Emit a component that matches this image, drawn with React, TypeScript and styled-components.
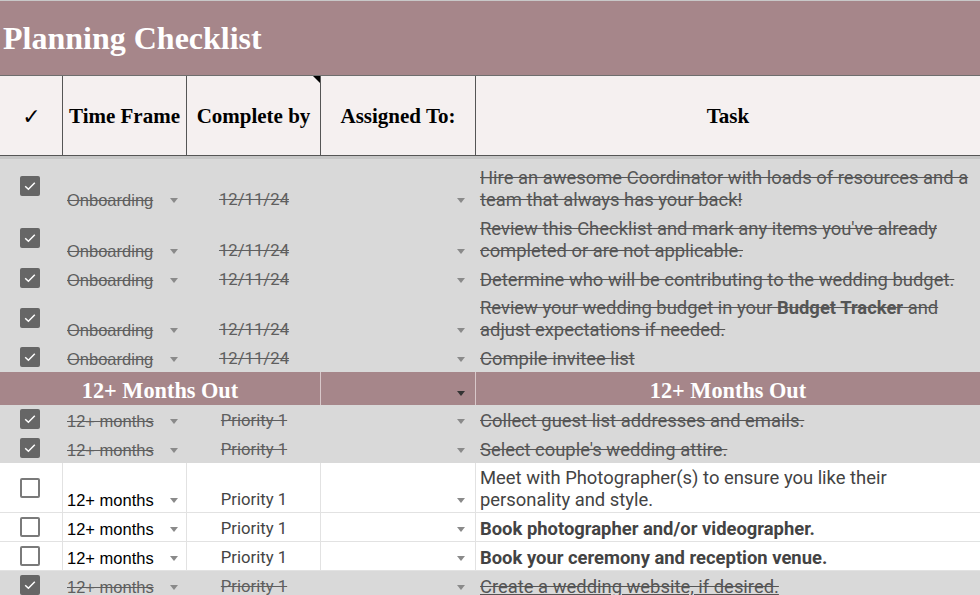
import React from "react";
import styled, { createGlobalStyle } from "styled-components";

const Global = createGlobalStyle`
  html, body { margin: 0; padding: 0; background: #ffffff; overflow: hidden; }
  * { box-sizing: border-box; }
`;

const COLS = "63px 124px 134px 155px 1fr";
const MAUVE = "#a6868a";

const Sheet = styled.div`
  width: 980px;
  font-family: Roboto, "Liberation Sans", sans-serif;
`;

const TitleBar = styled.div`
  height: 75px;
  border-top: 1px solid #c8c8c8;
  background: ${MAUVE};
  display: flex;
  align-items: center;
  padding-left: 3px;
  font-family: "Liberation Serif", serif;
  font-weight: 700;
  font-size: 32px;
  color: #ffffff;
`;

const HeaderRow = styled.div`
  display: grid;
  grid-template-columns: ${COLS};
  height: 81px;
  border-top: 1px solid #6e6e6e;
  border-bottom: 1px solid #555555;
  background: #f5f0f0;
`;

const HeaderCell = styled.div<{ $last?: boolean; $note?: boolean }>`
  position: relative;
  display: flex;
  align-items: center;
  justify-content: center;
  padding-top: 1px;
  border-right: ${(p) => (p.$last ? "none" : "1px solid #555555")};
  font-family: "Liberation Serif", serif;
  font-weight: 700;
  font-size: 21px;
  color: #000000;
  &::after {
    content: "";
    display: ${(p) => (p.$note ? "block" : "none")};
    position: absolute;
    top: 0;
    right: 0;
    border-top: 7px solid #000;
    border-left: 7px solid transparent;
  }
`;

const CheckGlyph = styled.span`
  font-family: "DejaVu Sans", sans-serif;
  font-size: 22px;
  padding-left: 1px;
`;

const FreezeBar = styled.div`
  height: 3px;
  background: #c6c6c6;
`;

const Row = styled.div<{ $done: boolean; $h: number }>`
  display: grid;
  grid-template-columns: ${COLS};
  height: ${(p) => p.$h}px;
  background: ${(p) => (p.$done ? "#d9d9d9" : "#ffffff")};
  border-bottom: 1px solid ${(p) => (p.$done ? "#d9d9d9" : "#e2e2e2")};
`;

const Cell = styled.div<{ $done: boolean }>`
  border-right: 1px solid ${(p) => (p.$done ? "transparent" : "#e2e2e2")};
  display: flex;
  min-width: 0;
`;

const BoxCell = styled(Cell)`
  align-items: center;
  justify-content: center;
  padding-right: 2px;
`;

const Box = styled.span<{ $on: boolean }>`
  width: 20px;
  height: 20px;
  border-radius: 2px;
  display: flex;
  align-items: center;
  justify-content: center;
  background: ${(p) => (p.$on ? "#666666" : "#ffffff")};
  border: ${(p) => (p.$on ? "none" : "2px solid #7a7a7a")};
`;

const FrameCell = styled(Cell)`
  align-items: flex-end;
  justify-content: space-between;
  padding: 0 8px 1px 4px;
  font-family: "Liberation Sans", Arial, sans-serif;
  font-size: 16.5px;
  line-height: 22px;
  color: ${(p) => (p.$done ? "#5f5f5f" : "#000000")};
  text-decoration: ${(p) => (p.$done ? "line-through" : "none")};
`;

const DateCell = styled(Cell)`
  align-items: flex-end;
  justify-content: center;
  padding: 0 0 1px 1px;
  font-family: Roboto, sans-serif;
  font-size: 16.7px;
  line-height: 22px;
  color: ${(p) => (p.$done ? "#5f5f5f" : "#444444")};
  text-decoration: ${(p) => (p.$done ? "line-through" : "none")};
`;

const AssignCell = styled(Cell)`
  align-items: flex-end;
  justify-content: flex-end;
  padding: 0 10px 1px 0;
`;

const Arrow = styled.span<{ $dark?: boolean }>`
  width: 0;
  height: 0;
  margin-bottom: 8px;
  border-left: 4.5px solid transparent;
  border-right: 4.5px solid transparent;
  border-top: 5px solid ${(p) => (p.$dark ? "#333333" : "#8a8a8a")};
  text-decoration: none;
  flex-shrink: 0;
`;

const TaskCell = styled.div<{ $done: boolean; $bold?: boolean; $link?: boolean }>`
  display: flex;
  flex-direction: column;
  justify-content: flex-end;
  padding: 0 4px 1px 4px;
  font-family: Roboto, sans-serif;
  font-size: 18.4px;
  line-height: 22px;
  white-space: nowrap;
  overflow: hidden;
  font-weight: ${(p) => (p.$bold ? 700 : 400)};
  color: ${(p) => (p.$done ? "#555555" : "#434343")};
  text-decoration: ${(p) =>
    p.$link ? "line-through underline" : p.$done ? "line-through" : "none"};
  b { font-weight: 700; }
`;

const SectionRow = styled.div`
  display: grid;
  grid-template-columns: ${COLS};
  height: 33px;
  background: ${MAUVE};
`;

const SectionTitle = styled.div<{ $span?: boolean }>`
  grid-column: ${(p) => (p.$span ? "1 / span 3" : "auto")};
  border-right: ${(p) => (p.$span ? "1px solid #d8c8ca" : "none")};
  display: flex;
  align-items: center;
  justify-content: center;
  padding-top: 4px;
  font-family: "Liberation Serif", serif;
  font-weight: 700;
  font-size: 22.3px;
  color: #ffffff;
`;

const SectionAssign = styled.div`
  border-right: 1px solid #d8c8ca;
  display: flex;
  align-items: flex-end;
  justify-content: flex-end;
  padding: 0 10px 1px 0;
`;

type Item = {
  done: boolean;
  frame: string;
  by: string;
  task: React.ReactNode[];
  h: number;
  bold?: boolean;
  link?: boolean;
};

const onboarding: Item[] = [
  {
    done: true,
    frame: "Onboarding",
    by: "12/11/24",
    task: ["Hire an awesome Coordinator with loads of resources and a", "team that always has your back!"],
    h: 54,
  },
  {
    done: true,
    frame: "Onboarding",
    by: "12/11/24",
    task: ["Review this Checklist and mark any items you've already", "completed or are not applicable."],
    h: 51,
  },
  {
    done: true,
    frame: "Onboarding",
    by: "12/11/24",
    task: ["Determine who will be contributing to the wedding budget."],
    h: 29,
  },
  {
    done: true,
    frame: "Onboarding",
    by: "12/11/24",
    task: [
      <>Review your wedding budget in your <b>Budget Tracker</b> and</>,
      "adjust expectations if needed.",
    ],
    h: 50,
  },
  { done: true, frame: "Onboarding", by: "12/11/24", task: ["Compile invitee list"], h: 29 },
];

const twelve: Item[] = [
  { done: true, frame: "12+ months", by: "Priority 1", task: ["Collect guest list addresses and emails."], h: 29 },
  { done: true, frame: "12+ months", by: "Priority 1", task: ["Select couple's wedding attire."], h: 29 },
  {
    done: false,
    frame: "12+ months",
    by: "Priority 1",
    task: ["Meet with Photographer(s) to ensure you like their", "personality and style."],
    h: 50,
  },
  { done: false, frame: "12+ months", by: "Priority 1", task: ["Book photographer and/or videographer."], h: 29, bold: true },
  { done: false, frame: "12+ months", by: "Priority 1", task: ["Book your ceremony and reception venue."], h: 29, bold: true },
  { done: true, frame: "12+ months", by: "Priority 1", task: ["Create a wedding website, if desired."], h: 29, link: true },
];

function Check({ on }: { on: boolean }) {
  return (
    <Box $on={on}>
      {on && (
        <svg width="16" height="16" viewBox="0 0 16 16">
          <polyline points="3.2,8.2 6.4,11.2 12.8,4.8" fill="none" stroke="#ffffff" strokeWidth="1.5" />
        </svg>
      )}
    </Box>
  );
}

function ItemRow({ it }: { it: Item }) {
  return (
    <Row $done={it.done} $h={it.h}>
      <BoxCell $done={it.done}>
        <Check on={it.done} />
      </BoxCell>
      <FrameCell $done={it.done}>
        <span>{it.frame}</span>
        <Arrow />
      </FrameCell>
      <DateCell $done={it.done}>{it.by}</DateCell>
      <AssignCell $done={it.done}>
        <Arrow />
      </AssignCell>
      <TaskCell $done={it.done} $bold={it.bold} $link={it.link}>
        {it.task.map((t, i) => (
          <span key={i}>{t}</span>
        ))}
      </TaskCell>
    </Row>
  );
}

export default function App() {
  return (
    <Sheet>
      <Global />
      <TitleBar>Planning Checklist</TitleBar>
      <HeaderRow>
        <HeaderCell>
          <CheckGlyph>✓</CheckGlyph>
        </HeaderCell>
        <HeaderCell>Time Frame</HeaderCell>
        <HeaderCell $note>Complete by</HeaderCell>
        <HeaderCell>Assigned To:</HeaderCell>
        <HeaderCell $last>Task</HeaderCell>
      </HeaderRow>
      <FreezeBar />
      {onboarding.map((it, i) => (
        <ItemRow key={"o" + i} it={it} />
      ))}
      <SectionRow>
        <SectionTitle $span>12+ Months Out</SectionTitle>
        <SectionAssign>
          <Arrow $dark />
        </SectionAssign>
        <SectionTitle>12+ Months Out</SectionTitle>
      </SectionRow>
      {twelve.map((it, i) => (
        <ItemRow key={"t" + i} it={it} />
      ))}
    </Sheet>
  );
}
